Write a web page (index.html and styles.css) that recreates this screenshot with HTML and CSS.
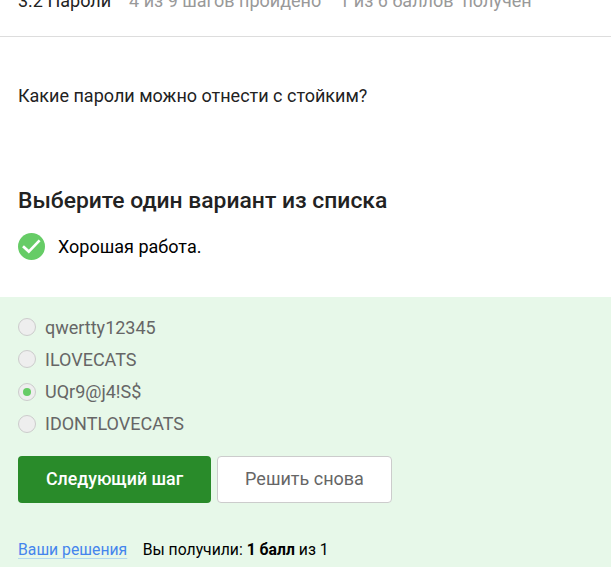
FILE: index.html
```html
<!DOCTYPE html>
<html lang="ru">
<head>
<meta charset="utf-8">
<title>Пароли</title>
<link rel="stylesheet" href="styles.css">
</head>
<body>
<header class="topbar">
  <span class="lesson">3.2 Пароли</span>
  <span class="steps">4 из 9 шагов пройдено</span>
  <span class="points">1 из 6 баллов&nbsp; получен</span>
</header>
<main>
  <p class="question">Какие пароли можно отнести с стойким?</p>
  <h2 class="title">Выберите один вариант из списка</h2>
  <div class="status">
    <svg class="status-icon" viewBox="0 0 27 27"><circle cx="13.5" cy="13.5" r="13.5" fill="#66cc66"/><path d="M5 13.2l5.8 5.4L21.6 7.4" fill="none" stroke="#fff" stroke-width="2.7"/></svg>
    <span>Хорошая работа.</span>
  </div>
  <section class="quiz">
    <ul class="options">
      <li class="option"><span class="radio"></span><span>qwertty12345</span></li>
      <li class="option"><span class="radio"></span><span>ILOVECATS</span></li>
      <li class="option"><span class="radio checked"></span><span>UQr9@j4!S$</span></li>
      <li class="option"><span class="radio"></span><span>IDONTLOVECATS</span></li>
    </ul>
    <div class="actions">
      <button class="btn primary">Следующий шаг</button>
      <button class="btn secondary">Решить снова</button>
    </div>
    <div class="result">
      <a class="solutions">Ваши решения</a>
      <span class="score">Вы получили: <b>1 балл</b> из 1</span>
    </div>
  </section>
</main>
</body>
</html>
```
FILE: styles.css
```css
* { box-sizing: border-box; }
html { overflow: hidden; }
body {
  margin: 0;
  height: 567px;
  overflow: hidden;
  background: #fff;
  color: #222;
  font-family: Roboto, "Liberation Sans", sans-serif;
  font-size: 18px;
}
.topbar {
  display: flex;
  gap: 18px;
  height: 37px;
  padding-left: 18px;
  border-bottom: 1px solid #ddd;
  line-height: 28px;
  white-space: nowrap;
}
.topbar span { margin-top: -13px; }
.steps, .points { color: #999; }
.question { margin: 45px 18px 0; line-height: 28px; }
.title { margin: 75px 18px 0; font-size: 22.86px; font-weight: 500; line-height: 32px; }
.status { display: flex; align-items: center; gap: 13px; height: 27px; margin: 16px 18px 0; color: #000; line-height: 27px; }
.status-icon { width: 27px; height: 27px; }
.quiz { height: 270px; margin-top: 37px; padding: 14px 18px 0; background: #e7f8e9; }
.options { margin: 0; padding: 0; list-style: none; color: #666; }
.option { display: flex; align-items: center; gap: 9px; height: 32px; line-height: 24px; }
.option > span:last-child { padding-top: 2px; }
.radio {
  display: flex;
  align-items: center;
  justify-content: center;
  width: 18px;
  height: 18px;
  border: 1px solid #ccc;
  border-radius: 50%;
  background: #eee;
}
.option:nth-child(n+3) .radio { margin-top: 2px; }
.checked::after { content: ""; width: 8px; height: 8px; border-radius: 50%; background: #6c6; }
.actions { display: flex; gap: 6px; margin-top: 17px; }
.btn { height: 47px; padding: 0 0 2px; border: 0; border-radius: 4px; font: 500 17.8px Roboto, sans-serif; }
.primary { width: 193px; background: #298b2a; color: #fff; }
.secondary { width: 175px; border: 1px solid #ccc; background: #fff; color: #666; font-size: 18px; font-weight: 400; }
.result { display: flex; gap: 15.4px; margin-top: 36px; color: #000; font-size: 15.75px; line-height: 22px; }
.solutions {
  color: #4485ed;
  text-decoration: underline;
  text-decoration-color: #b3d9ee;
  text-decoration-thickness: 1px;
  text-underline-offset: 3px;
}
```
